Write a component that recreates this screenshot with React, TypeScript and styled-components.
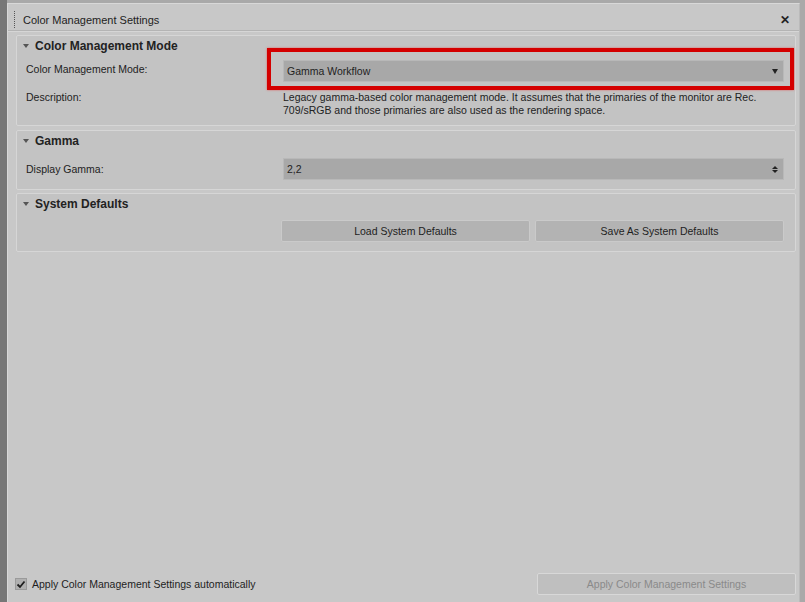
import React from 'react';
import styled, { createGlobalStyle } from 'styled-components';

const GlobalStyle = createGlobalStyle`
  html, body {
    margin: 0;
    padding: 0;
    height: 100%;
    background: #7a7a7a;
    font-family: "Liberation Sans", Arial, sans-serif;
    font-size: 10.5px;
    color: #1e1e1e;
  }
  #root {
    height: 100%;
  }
`;

const Desktop = styled.div`
  height: 602px;
  width: 805px;
  padding: 3px 5px 0 7px;
  box-sizing: border-box;
  display: flex;
  background: linear-gradient(to right, #777 0 7px, #a9a9a9 7px);
`;

const Window = styled.div`
  flex: 1;
  display: flex;
  flex-direction: column;
  background: #c8c8c8;
  border-left: 1px solid #d8d8d8;
  border-top: 1px solid #d8d8d8;
  border-right: 1px solid #bababa;
`;

const TitleBar = styled.div`
  height: 27px;
  box-sizing: border-box;
  display: flex;
  align-items: center;
  padding: 5px 9px 0 6px;
  border-bottom: 1px solid #b4b4b4;
  box-shadow: 0 1px 0 #d6d6d6;
`;

const Grip = styled.div`
  width: 0;
  height: 17px;
  border-left: 1px dotted #555;
  margin-right: 8px;
`;

const Title = styled.div`
  flex: 1;
  font-size: 11px;
  color: #222;
`;

const Close = styled.div`
  font-size: 12px;
  font-weight: bold;
  color: #222;
  line-height: 1;
`;

const Body = styled.div`
  flex: 1;
  display: flex;
  flex-direction: column;
  padding: 4px 3px 0 8px;
`;

const Panel = styled.div<{ $gap?: number }>`
  background: #c3c3c3;
  border: 1px solid #d6d6d6;
  border-radius: 2px;
  padding: 2px 11px 0 9px;
  margin-top: ${(p) => p.$gap ?? 0}px;
`;

const Header = styled.div`
  display: flex;
  align-items: center;
  height: 15px;
  margin-left: -3px;
  font-weight: bold;
  font-size: 12px;
  color: #222;
`;

const Caret = styled.span`
  width: 0;
  height: 0;
  border-left: 3px solid transparent;
  border-right: 3px solid transparent;
  border-top: 4px solid #555;
  margin-right: 6px;
`;

const Row = styled.div<{ $top?: number; $bottom?: number }>`
  display: grid;
  grid-template-columns: 257px 1fr;
  align-items: center;
  margin-top: ${(p) => p.$top ?? 0}px;
  margin-bottom: ${(p) => p.$bottom ?? 0}px;
`;

const Label = styled.div`
  line-height: 13px;
  color: #222;
`;

const Highlight = styled.div`
  margin-left: -16px;
  margin-right: -10px;
  border: 4px solid #d40000;
  box-shadow: 0 0 2px #e06060;
  padding: 8px 6px 4px 12px;
`;

const Field = styled.div`
  height: 22px;
  box-sizing: border-box;
  background: #a8a8a8;
  border: 1px solid #b8b8b8;
  display: flex;
  align-items: center;
  padding: 0 5px 0 3px;
  color: #1e1e1e;
  span {
    flex: 1;
  }
`;

const DownArrow = styled.span`
  flex: none !important;
  width: 0;
  height: 0;
  border-left: 3.5px solid transparent;
  border-right: 3.5px solid transparent;
  border-top: 5px solid #222;
`;

const Spin = styled.div`
  display: flex;
  flex-direction: column;
  gap: 1px;
  i {
    width: 0;
    height: 0;
    border-left: 3px solid transparent;
    border-right: 3px solid transparent;
  }
  i:first-child {
    border-bottom: 3px solid #222;
  }
  i:last-child {
    border-top: 3px solid #222;
  }
`;

const Description = styled.div`
  line-height: 13px;
  color: #222;
`;

const Buttons = styled.div`
  display: grid;
  grid-template-columns: 1fr 1fr;
  gap: 5px;
  margin-left: -2px;
`;

const Button = styled.div<{ $disabled?: boolean }>`
  height: 22px;
  box-sizing: border-box;
  border: 1px solid ${(p) => (p.$disabled ? '#d8d8d8' : '#cacaca')};
  border-radius: 2px;
  background: ${(p) => (p.$disabled ? '#bfbfbf' : '#b3b3b3')};
  display: flex;
  align-items: center;
  justify-content: center;
  color: ${(p) => (p.$disabled ? '#8a8a8a' : '#1e1e1e')};
`;

const Footer = styled.div`
  display: flex;
  align-items: center;
  justify-content: space-between;
  padding: 0 3px 7px 7px;
`;

const Check = styled.label`
  display: flex;
  align-items: center;
  gap: 5px;
  color: #1e1e1e;
`;

const Box = styled.span`
  width: 12px;
  height: 12px;
  box-sizing: border-box;
  background: #b0b0b0;
  border: 1px solid #9a9a9a;
  display: flex;
  align-items: center;
  justify-content: center;
`;

const ApplyButton = styled(Button)`
  width: 259px;
`;

export default function App() {
  return (
    <>
      <GlobalStyle />
      <Desktop>
        <Window>
          <TitleBar>
            <Grip />
            <Title>Color Management Settings</Title>
            <Close>✕</Close>
          </TitleBar>
          <Body>
            <Panel>
              <Header>
                <Caret />
                Color Management Mode
              </Header>
              <Row $top={-5}>
                <Label>Color Management Mode:</Label>
                <Highlight>
                  <Field>
                    <span>Gamma Workflow</span>
                    <DownArrow />
                  </Field>
                </Highlight>
              </Row>
              <Row $top={1} $bottom={8} style={{ alignItems: 'start' }}>
                <Label>Description:</Label>
                <Description>
                  Legacy gamma-based color management mode. It assumes that the primaries of the monitor are Rec.
                  <br />
                  709/sRGB and those primaries are also used as the rendering space.
                </Description>
              </Row>
            </Panel>
            <Panel $gap={4}>
              <Header>
                <Caret />
                Gamma
              </Header>
              <Row $top={10} $bottom={9}>
                <Label>Display Gamma:</Label>
                <Field>
                  <span>2,2</span>
                  <Spin>
                    <i />
                    <i />
                  </Spin>
                </Field>
              </Row>
            </Panel>
            <Panel $gap={3}>
              <Header>
                <Caret />
                System Defaults
              </Header>
              <Row $top={9} $bottom={9}>
                <div />
                <Buttons>
                  <Button>Load System Defaults</Button>
                  <Button>Save As System Defaults</Button>
                </Buttons>
              </Row>
            </Panel>
          </Body>
          <Footer>
            <Check>
              <Box>
                <svg width="10" height="9" viewBox="0 0 10 9">
                  <path d="M1.5 4.5 L4 7 L8.5 1.5" fill="none" stroke="#1e1e1e" strokeWidth="1.8" />
                </svg>
              </Box>
              Apply Color Management Settings automatically
            </Check>
            <ApplyButton $disabled>Apply Color Management Settings</ApplyButton>
          </Footer>
        </Window>
      </Desktop>
    </>
  );
}
